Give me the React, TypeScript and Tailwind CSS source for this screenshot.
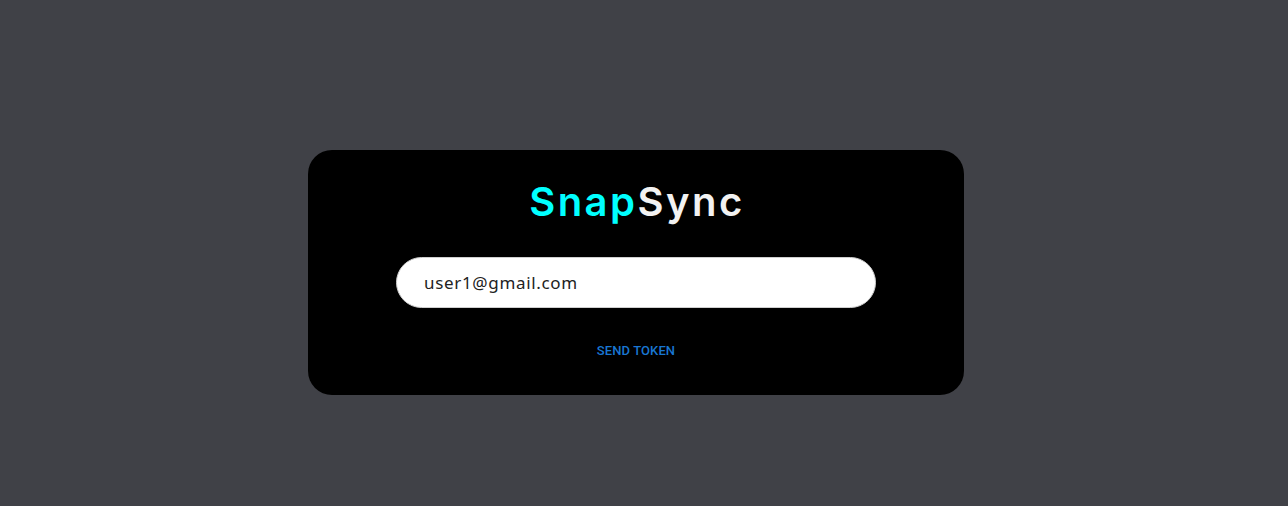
import React from "react";

export default function App() {
  return (
    <div className="w-full h-[506px] bg-[#404147] flex justify-center pt-[150px] pr-[16px]" style={{ fontFamily: "Roboto, sans-serif" }}>
      <div className="w-[656px] h-[245px] bg-black rounded-[24px] flex flex-col items-center pt-[28px]">
        <h1 className="h-[48px] leading-[48px] text-[40px] font-semibold tracking-[2.5px] pl-[2px]" style={{ fontFamily: "Inter, sans-serif" }}>
          <span className="text-[#00ffff]">Snap</span>
          <span className="text-[#f2f2f2]">Sync</span>
        </h1>
        <div className="mt-[31px] w-[480px] h-[51px] bg-white rounded-full border border-[#cfcfcf] flex items-center pl-[27px]">
          <span className="text-[17px] text-[#222] tracking-[0.67px]" style={{ fontFamily: "'Noto Sans', sans-serif" }}>user1@gmail.com</span>
        </div>
        <button className="mt-[28px] h-[30px] px-[5px] text-[13px] font-medium uppercase text-[#1976d2] tracking-[0.1px]" style={{ fontFamily: "Roboto, sans-serif" }}>
          Send Token
        </button>
      </div>
    </div>
  );
}
